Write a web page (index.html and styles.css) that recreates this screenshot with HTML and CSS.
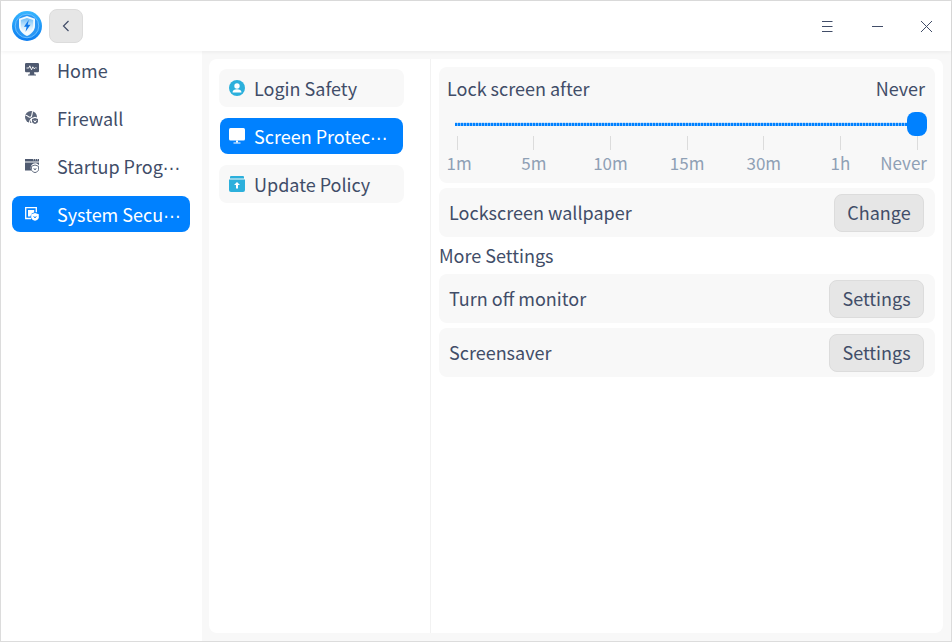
FILE: index.html
```html
<!DOCTYPE html>
<html lang="en">
<head>
<meta charset="utf-8">
<title>Security</title>
<link rel="stylesheet" href="styles.css">
</head>
<body>
<div class="window">
  <header class="titlebar">
    <svg class="logo" viewBox="0 0 32 32" width="32" height="32">
      <defs>
        <linearGradient id="lg" x1="0" y1="0" x2="0" y2="1"><stop offset="0" stop-color="#35b6ff"/><stop offset="1" stop-color="#0c7cf0"/></linearGradient>
        <linearGradient id="sg" x1="0" y1="0" x2="0" y2="1"><stop offset="0" stop-color="#6fbdf7"/><stop offset=".6" stop-color="#d8eefc"/><stop offset="1" stop-color="#ffffff"/></linearGradient>
      </defs>
      <circle cx="16" cy="16" r="15" fill="url(#lg)"/>
      <circle cx="16" cy="16" r="11.800" fill="#2a97f5" stroke="#7cc8ff" stroke-width=".8"/>
      <path d="M16 6l8 2.800v6.900c0 4.800-3.400 8-8 10.300-4.600-2.300-8-5.500-8-10.300V8.800z" fill="#f2faff"/>
      <path d="M16 8l6.200 2.100v5.600c0 3.800-2.600 6.300-6.200 8.200-3.600-1.900-6.200-4.400-6.200-8.200v-5.600z" fill="url(#sg)"/>
      <path d="M17.800 9.800l-4.800 6.900h2.600l-1.100 5 5-7h-2.800z" fill="#0f78ea"/>
    </svg>
    <button class="back" type="button" aria-label="Back">
      <svg class="back-icon" viewBox="0 0 12 16"><path d="M8.500 3L3.500 8l5 5" fill="none" stroke="#414d68" stroke-width="1.200"/></svg>
    </button>
    <div class="window-controls">
      <svg class="ctl" viewBox="0 0 11 11"><path d="M0 .5h10.500M0 5.500h10.500M0 10.500h10.500" stroke="#414d68" fill="none"/></svg>
      <svg class="ctl" viewBox="0 0 11 11"><path d="M0 5.500h11" stroke="#414d68" fill="none"/></svg>
      <svg class="ctl" viewBox="0 0 11 11"><path d="M0 0l11 11M11 0L0 11" stroke="#414d68" stroke-width="1" fill="none"/></svg>
    </div>
  </header>
  <div class="body">
    <nav class="sidebar">
      <a class="nav-item">
        <svg class="nav-icon" viewBox="0 0 14 14"><path d="M1.200 0h11.600A1.200 1.200 0 0 1 14 1.200V8a1.200 1.200 0 0 1-1.200 1.200H9l.5 2.300H11v1H3v-1h1.500L5 9.200H1.200A1.200 1.200 0 0 1 0 8V1.200A1.200 1.200 0 0 1 1.200 0z" fill="#4f5a70"/><path d="M1.500 5h2.300l1-2.200 1.700 4 1.300-3 1 1.600h1.200l.7-.8.800.4" fill="none" stroke="#fff" stroke-width=".9"/></svg>
        <span class="label">Home</span>
      </a>
      <a class="nav-item">
        <svg class="nav-icon" viewBox="0 0 14 14"><circle cx="6" cy="6" r="6" fill="#5b6579"/><path d="M.5 4.200c2.500 0 2.800 2.800 5 2s.8-4 2.500-6M4.500 12c0-3 1.500-4.800 5-4.800" stroke="#fff" stroke-width="1.100" fill="none"/><path d="M10 5.800l4 1.400v3.300c0 1.600-1.700 2.800-4 3.500-2.300-.7-4-1.900-4-3.500V7.200z" fill="#fff"/><path d="M10 6.900l3 1v2.600c0 1.100-1.300 2.100-3 2.500-1.700-.4-3-1.400-3-2.500V7.900z" fill="#5b6579"/><path d="M8.700 9.300L10 11.200l1.300-1.900" stroke="#fff" stroke-width="1" fill="none"/></svg>
        <span class="label">Firewall</span>
      </a>
      <a class="nav-item">
        <svg class="nav-icon" viewBox="0 0 14 14"><path d="M0 0h14v2.400H0zM0 3.400h14v2.800a4.500 4.500 0 0 0-7.500 5.300H0z" fill="#4f5a70"/><path d="M8 .8h1M10 .8h1M12 .8h1" stroke="#fff" stroke-width=".8"/><path d="M10 6l3.600 1.300v3.100c0 1.500-1.500 2.600-3.600 3.200-2.100-.6-3.600-1.700-3.600-3.200V7.300z" fill="#fff" stroke="#4f5a70" stroke-width=".9"/><path d="M8.800 9.200L10 11l1.200-1.800" stroke="#4f5a70" stroke-width=".9" fill="none"/></svg>
        <span class="label">Startup Prog<span class="more">⋯</span></span>
      </a>
      <a class="nav-item active">
        <svg class="nav-icon" viewBox="0 0 14 14"><path d="M6 11.500H.7V.7h10.600v4.500" fill="none" stroke="#fff" stroke-width="1.300"/><path d="M3 3h6.200v2.400A4.500 4.500 0 0 0 5.500 9.500H3z" fill="#fff"/><path d="M10 6l3.800 1.300v3.100c0 1.500-1.600 2.600-3.800 3.400-2.200-.8-3.800-1.900-3.800-3.400V7.300z" fill="#fff"/><path d="M8.700 9.200L10 11l1.300-1.800" stroke="#0081ff" stroke-width=".9" fill="none"/></svg>
        <span class="label">System Secu<span class="more">⋯</span></span>
      </a>
    </nav>
    <div class="panel">
      <div class="subnav">
        <a class="sub-item">
          <svg class="sub-icon" viewBox="0 0 16 16"><circle cx="8" cy="8" r="8" fill="#2cb0dc"/><circle cx="8" cy="6" r="2.700" fill="#fff"/><path d="M3.500 12.500c0-2.200 2-3.300 4.500-3.300s4.500 1.100 4.500 3.300z" fill="#fff"/></svg>
          <span class="label">Login Safety</span>
        </a>
        <a class="sub-item active">
          <svg class="sub-icon" viewBox="0 0 16 16"><rect x="0" y="0" width="16" height="12.500" rx="1.500" fill="#fff"/><path d="M7 12.500h2v1.800H7zM4.500 14.500h7v1h-7z" fill="#fff"/></svg>
          <span class="label">Screen Protec<span class="more">⋯</span></span>
        </a>
        <a class="sub-item">
          <svg class="sub-icon" viewBox="0 0 16 16"><path d="M2 0h12a1 1 0 0 1 1 1v1.500H1V1a1 1 0 0 1 1-1z" fill="#2cb0dc"/><path d="M0 3.500h16V14a2 2 0 0 1-2 2H2a2 2 0 0 1-2-2z" fill="#2cb0dc"/><path d="M8 6l3 3H9v3.500H7V9H5z" fill="#fff"/></svg>
          <span class="label">Update Policy</span>
        </a>
      </div>
      <main class="settings">
        <section class="card slider-card">
          <div class="slider-head">
            <span>Lock screen after</span>
            <span>Never</span>
          </div>
          <div class="slider-track">
            <div class="slider-line"></div>
            <div class="slider-handle"></div>
          </div>
          <div class="ticks">
            <i></i><i></i><i></i><i></i><i></i><i></i><i></i>
          </div>
          <div class="tick-labels">
            <span class="first">1m</span><span>5m</span><span>10m</span><span>15m</span><span>30m</span><span>1h</span><span class="last">Never</span>
          </div>
        </section>
        <section class="card row">
          <span class="row-text">Lockscreen wallpaper</span>
          <button class="btn wide" type="button">Change</button>
        </section>
        <h2 class="section-title">More Settings</h2>
        <section class="card row">
          <span class="row-text">Turn off monitor</span>
          <button class="btn" type="button">Settings</button>
        </section>
        <section class="card row">
          <span class="row-text">Screensaver</span>
          <button class="btn" type="button">Settings</button>
        </section>
      </main>
    </div>
  </div>
</div>
</body>
</html>
```
FILE: styles.css
```css
* { box-sizing: border-box; }
html, body { margin: 0; padding: 0; height: 100%; }
body {
  font-family: "Noto Sans CJK SC", "Noto Sans", sans-serif;
  font-size: 18px;
  color: #414d68;
  background: #fff;
  overflow: hidden;
}
.window {
  width: 952px;
  height: 642px;
  border: 1px solid #dcdcdc;
  display: flex;
  flex-direction: column;
  background: #f8f8f8;
}
.titlebar {
  height: 50px;
  flex: none;
  background: #fff;
  display: flex;
  align-items: center;
  padding-left: 10px;
  position: relative;
  z-index: 2;
  box-shadow: 0 1px 4px rgba(0,0,0,.06);
}
.logo { flex: none; width: 32px; height: 32px; }
.back {
  width: 34px;
  height: 34px;
  margin-left: 6px;
  padding: 0;
  border: 1px solid #dcdcdc;
  border-radius: 8px;
  background: #e6e6e6;
  display: flex;
  align-items: center;
  justify-content: center;
}
.back-icon { width: 12px; height: 16px; }
.ctl { width: 11px; height: 11px; flex: none; }
.window-controls {
  margin-left: auto;
  display: flex;
  align-items: center;
  gap: 38.500px;
  padding-right: 19px;
}
.body { flex: 1; display: flex; min-height: 0; }
.sidebar {
  width: 201px;
  flex: none;
  background: #fff;
  padding: 1px 11px 0;
  display: flex;
  flex-direction: column;
  gap: 12px;
}
.nav-item {
  height: 36px;
  width: 178px;
  border-radius: 8px;
  display: flex;
  align-items: center;
  padding-left: 13px;
  gap: 18px;
}
.nav-item.active, .sub-item.active { background: #0081ff; color: #fff; }
.nav-icon { width: 14px; height: 14px; flex: none; }
.label {
  flex: 1;
  min-width: 0;
  white-space: nowrap;
}
.more { font-family: "DejaVu Sans", sans-serif; font-size: 17px; line-height: 1; }
.panel {
  flex: 1;
  margin: 8px 8px 8px 7px;
  background: #fff;
  border-radius: 8px;
  display: flex;
  min-width: 0;
}
.subnav {
  width: 222px;
  flex: none;
  border-right: 1px solid #f2f2f2;
  padding: 10px 0 0 10px;
  display: flex;
  flex-direction: column;
  gap: 10px;
}
.sub-item {
  width: 185px;
  height: 38px;
  border-radius: 8px;
  background: #f8f8f8;
  display: flex;
  align-items: center;
  gap: 9px;
  padding-left: 10px;
}
.sub-item.active {
  width: 183px;
  height: 36px;
  margin: 1px;
  padding-left: 9px;
}
.sub-icon { width: 16px; height: 16px; flex: none; }
.settings {
  flex: 1;
  min-width: 0;
  padding: 8px 8px 0 8px;
  display: flex;
  flex-direction: column;
  gap: 5px;
}
.card {
  background: #f8f8f8;
  border-radius: 8px;
  flex: none;
}
.slider-card { height: 116px; padding: 9px 10px 0 8px; }
.slider-head {
  display: flex;
  justify-content: space-between;
  line-height: 24px;
}
.slider-track { position: relative; height: 24px; margin-top: 12px; }
.slider-line {
  position: absolute;
  left: 8px;
  right: 8px;
  top: 10px;
  height: 4px;
  background:
    repeating-linear-gradient(90deg, #0081ff 0 2px, #7dbcfb 2px 3px) 0 100% / 100% 3px no-repeat,
    repeating-linear-gradient(90deg, #cfe4fa 0 2px, #eef3f9 2px 3px);
}
.slider-handle {
  position: absolute;
  right: -2px;
  top: 0;
  width: 20px;
  height: 24px;
  border-radius: 8px;
  background: #0081ff;
}
.ticks {
  display: flex;
  justify-content: space-between;
  padding: 0 7.300px 0 9.700px;
  height: 14px;
}
.ticks i { width: 1px; background: #dcdcdc; }
.tick-labels {
  display: flex;
  justify-content: space-between;
  padding: 0 7.300px 0 9.700px;
  margin-top: 1px;
  font-size: 17px;
  line-height: 24px;
  color: #8fa0b5;
}
.tick-labels span {
  width: 1px;
  display: flex;
  justify-content: center;
  white-space: nowrap;
}
.tick-labels .first { translate: 2px; }
.tick-labels .last { translate: -13.500px; }
.row {
  height: 49px;
  display: flex;
  align-items: center;
  justify-content: space-between;
  padding: 0 11px 0 10px;
}
.row-text { margin-bottom: 2px; }
.section-title {
  margin: 1px 0 2px;
  font-size: 18px;
  font-weight: 400;
  line-height: 24px;
  height: 24px;
  flex: none;
}
.btn {
  width: 95px;
  height: 38px;
  margin-top: 1px;
  padding: 0 0 3px;
  border: 1px solid #dcdcdc;
  border-radius: 8px;
  background: #e6e6e6;
  color: #414d68;
  font: inherit;
}
.btn.wide { width: 90px; }
```
